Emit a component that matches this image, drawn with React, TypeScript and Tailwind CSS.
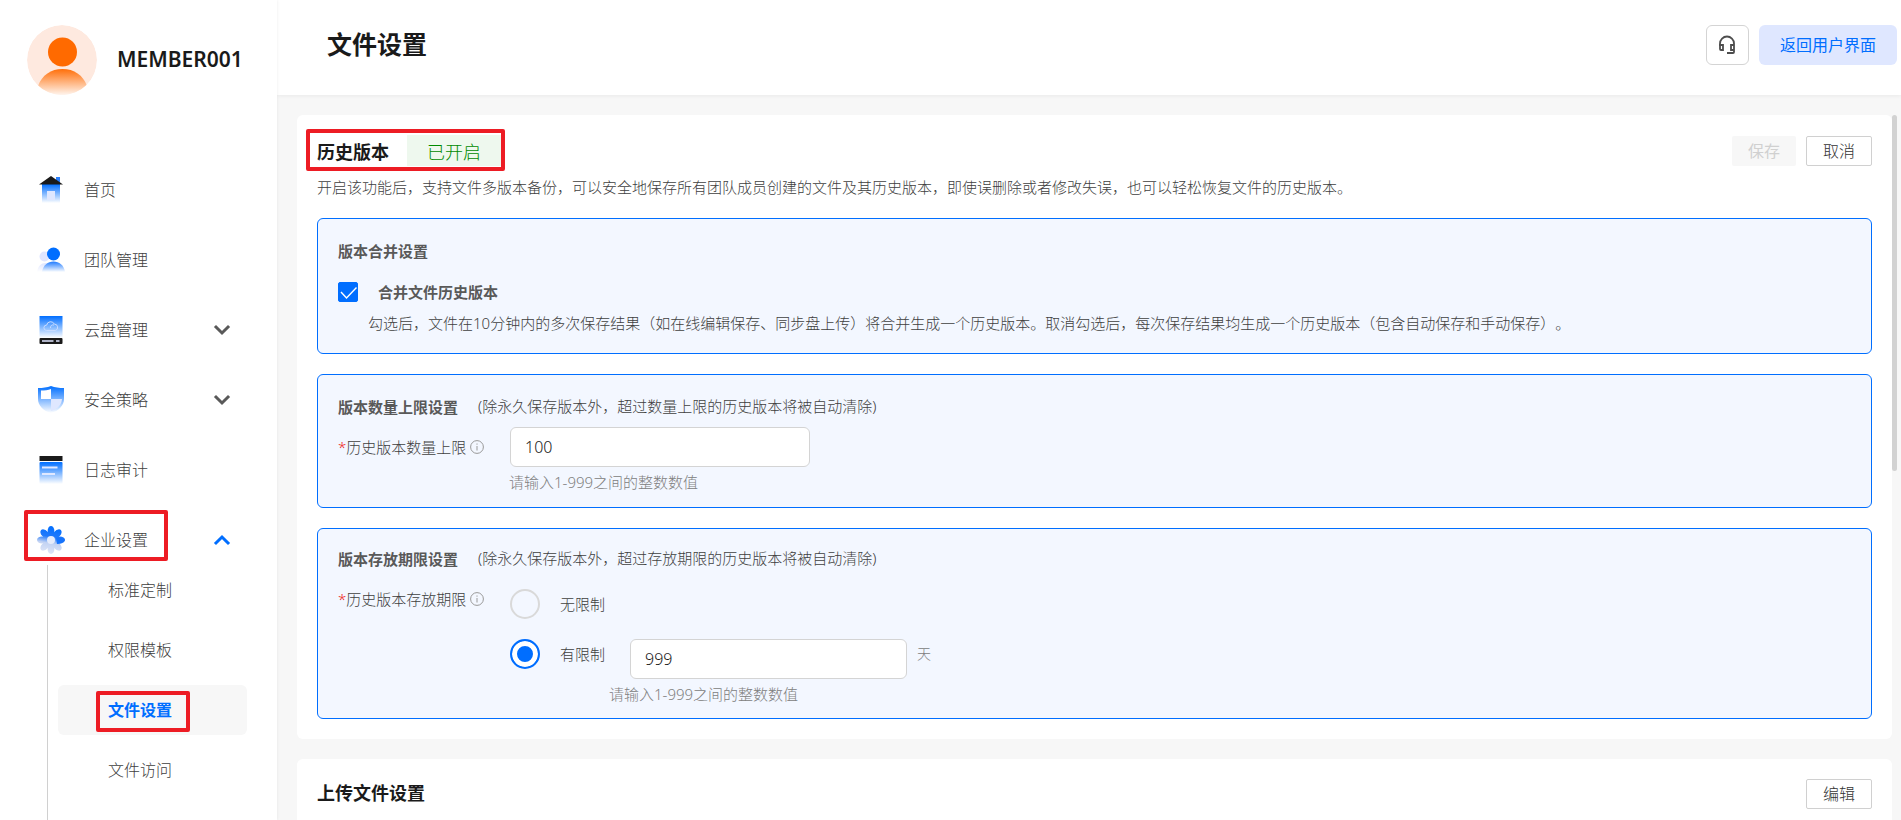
import { useState } from "react";
import type { ReactNode } from "react";
import { ChevronDown, ChevronUp } from "lucide-react";

function HomeIcon() {
  return (
    <svg width="28" height="28" viewBox="0 0 28 28">
      <defs>
        <linearGradient id="home" x1="0" y1="0" x2="0" y2="1">
          <stop offset="0" stopColor="#006eff" />
          <stop offset="1" stopColor="#fff" />
        </linearGradient>
      </defs>
      <path d="M19 1h4v6h-4z" fill="#2a7ffb" />
      <path d="M5 8h18v19H5z" fill="url(#home)" />
      <path d="M14 0l12 8.500H2z" fill="#1a1a1a" />
      <path d="M10 15h8v9h-8z" fill="#dfe7ff" />
    </svg>
  );
}

function TeamIcon() {
  return (
    <svg width="28" height="28" viewBox="0 0 28 28">
      <defs>
        <linearGradient id="team" x1="0" y1="0" x2="0" y2="1">
          <stop offset="0" stopColor="#1f7bff" />
          <stop offset="1" stopColor="#fff" />
        </linearGradient>
        <linearGradient id="teamBack" x1="0" y1="0" x2="0" y2="1">
          <stop offset="0" stopColor="#dfe5ff" />
          <stop offset="1" stopColor="#fff" />
        </linearGradient>
      </defs>
      <circle cx="7.500" cy="10.500" r="5" fill="#dfe5ff" />
      <path d="M0 26c1-6 4-9 9-9h3v9z" fill="url(#teamBack)" />
      <circle cx="16.500" cy="8" r="6.500" fill="#006eff" />
      <path d="M5 26c1-7 6-10.500 11.500-10.500S27 19 28 26z" fill="url(#team)" />
    </svg>
  );
}

function DriveIcon() {
  return (
    <svg width="28" height="28" viewBox="0 0 28 28">
      <defs>
        <linearGradient id="drive" x1="0" y1="0" x2="0" y2="1">
          <stop offset="0" stopColor="#006eff" />
          <stop offset="1" stopColor="#fff" />
        </linearGradient>
      </defs>
      <path d="M2.500 0h23v22h-23z" fill="url(#drive)" />
      <path
        d="M9.500 14.500a2.700 2.700 0 0 1 .2-5.400 4 4 0 0 1 7.600-1 3.300 3.300 0 0 1 1.200 6.400zM13.500 12c-.2-2 1.300-3.600 3.500-3"
        fill="none"
        stroke="#c9dcff"
        strokeWidth="1"
      />
      <rect x="2.500" y="22" width="23" height="6" rx="1" fill="#1a1a1a" />
      <path d="M5 25h11.500M19 25h3.500" stroke="#dfe5ff" strokeWidth="1.500" />
    </svg>
  );
}

function ShieldIcon() {
  return (
    <svg width="28" height="28" viewBox="0 0 28 28">
      <defs>
        <linearGradient id="shield" x1="0" y1="0" x2="0" y2="1">
          <stop offset="0" stopColor="#006eff" />
          <stop offset="1" stopColor="#fff" />
        </linearGradient>
      </defs>
      <path d="M14 0c4 1.500 8 2 13 2v11c0 6.500-5.500 12-13 14C6.500 25 1 19.500 1 13V2c5 0 9-.5 13-2z" fill="url(#shield)" />
      <path d="M14 3v10H4V4.500C8 4.500 11 4 14 3z" fill="#fff" />
      <path d="M14 13h11c-.5 5.500-4 10-11 12z" fill="#dfe7ff" />
    </svg>
  );
}

function LogIcon() {
  return (
    <svg width="28" height="28" viewBox="0 0 28 28">
      <defs>
        <linearGradient id="log" x1="0" y1="0" x2="0" y2="1">
          <stop offset="0" stopColor="#006eff" />
          <stop offset="1" stopColor="#fff" />
        </linearGradient>
      </defs>
      <path d="M2.500 0h23v5h-23z" fill="#1a1a1a" />
      <rect x="2.500" y="6" width="23" height="22" rx="1" fill="url(#log)" />
      <path d="M5 11.500h15.500M5 18h13" stroke="#e0e8ff" strokeWidth="2.200" />
    </svg>
  );
}

function GearIcon() {
  const petals = [0, 45, 90, 135, 180, 225, 270, 315];
  return (
    <svg width="28" height="28" viewBox="0 0 28 28">
      <defs>
        <linearGradient id="gear" gradientUnits="userSpaceOnUse" x1="16" y1="0" x2="11" y2="28">
          <stop offset="0" stopColor="#006eff" />
          <stop offset=".38" stopColor="#2079fb" />
          <stop offset=".62" stopColor="#c3d3f3" />
          <stop offset="1" stopColor="#dfe6f7" />
        </linearGradient>
        <mask id="gearShape">
          {petals.map((a) => (
            <ellipse key={a} cx="14" cy="5" rx="3.400" ry="5" fill="#fff" transform={`rotate(${a} 14 14)`} />
          ))}
          <circle cx="14" cy="14" r="8.500" fill="#fff" />
        </mask>
      </defs>
      <rect width="28" height="28" fill="url(#gear)" mask="url(#gearShape)" />
      <path d="M19 12c4-1 8 0 9 2-1 2.500-4 4-8 4z" fill="#1673fb" />
      <circle cx="14" cy="14" r="4" fill="#e6ecfb" />
    </svg>
  );
}

function Avatar() {
  return (
    <svg width="70" height="70" viewBox="0 0 70 70" className="shrink-0">
      <defs>
        <linearGradient id="body" x1="0" y1="0" x2="0" y2="1">
          <stop offset="0" stopColor="#ff6f0a" />
          <stop offset="1" stopColor="#fff5ee" />
        </linearGradient>
        <clipPath id="round">
          <circle cx="35" cy="35" r="35" />
        </clipPath>
      </defs>
      <g clipPath="url(#round)">
        <circle cx="35" cy="35" r="35" fill="#fee9df" />
        <circle cx="35.500" cy="27" r="14.500" fill="#ff6a00" />
        <path d="M11 61c4-11 13-17 24.500-17S56 50 60 61l-8 9H19z" fill="url(#body)" />
      </g>
    </svg>
  );
}

function InfoIcon() {
  return (
    <svg width="14" height="14" viewBox="0 0 14 14" className="shrink-0" fill="none" stroke="#999">
      <circle cx="7" cy="7" r="6.400" />
      <path d="M7 6v4.500M7 3.500v1.200" />
    </svg>
  );
}

function HeadsetIcon() {
  return (
    <svg width="18" height="20" viewBox="0 0 18 20" fill="none" stroke="#4d4d4d" strokeWidth="1.800">
      <path d="M2 11V8.500a7 7 0 0 1 14 0V17a1 1 0 0 1-1 1H9" />
      <path d="M2 10h3v5H3a1 1 0 0 1-1-1zM16 10h-3v5h3" />
    </svg>
  );
}

// red callout frame drawn over its relative parent
function Callout({ className }: { className: string }) {
  return <span className={`pointer-events-none absolute rounded-xs border-4 border-[#ed1c24] ${className}`} />;
}

type NavItem = { label: string; icon: ReactNode; expandable?: boolean; open?: boolean };

const navItems: NavItem[] = [
  { label: "首页", icon: <HomeIcon /> },
  { label: "团队管理", icon: <TeamIcon /> },
  { label: "云盘管理", icon: <DriveIcon />, expandable: true },
  { label: "安全策略", icon: <ShieldIcon />, expandable: true },
  { label: "日志审计", icon: <LogIcon /> },
  { label: "企业设置", icon: <GearIcon />, expandable: true, open: true },
];

const subItems = ["标准定制", "权限模板", "文件设置", "文件访问"];

function Sidebar() {
  return (
    <aside className="z-10 w-[277px] shrink-0 overflow-hidden bg-white shadow-[0_0_3px_rgba(0,0,0,0.08)]">
      <div className="flex items-center gap-5 pt-[25px] pl-[27px]">
        <Avatar />
        <span className="text-[21px] font-semibold text-[#1a1a1a]">MEMBER001</span>
      </div>
      <nav className="mt-[70px]">
        <ul className="flex flex-col gap-5">
          {navItems.map((item) => (
            <li key={item.label}>
              <a href="#" className="relative flex h-[50px] items-center pr-[43px] pl-[37px] text-base">
                {item.icon}
                <span className="ml-[19px] flex-1">{item.label}</span>
                {item.expandable &&
                  (item.open ? (
                    <ChevronUp size={24} strokeWidth={3} strokeLinecap="square" strokeLinejoin="miter" className="text-[#006eff]" />
                  ) : (
                    <ChevronDown size={24} strokeWidth={3} strokeLinecap="square" strokeLinejoin="miter" className="text-[#595959]" />
                  ))}
                {item.open && <Callout className="-top-[5px] left-6 h-[51px] w-36" />}
              </a>
            </li>
          ))}
        </ul>
        <ul className="ml-[47px] flex flex-col gap-2.5 border-l border-[#d0d0d0] pr-[30px] pb-10 pl-2.5">
          {subItems.map((label) => {
            const active = label === "文件设置";
            return (
              <li key={label}>
                <a
                  href="#"
                  className={`relative flex h-[50px] items-center rounded-md pl-[50px] text-base ${
                    active ? "bg-[#f7f7f7] font-semibold text-[#006eff]" : ""
                  }`}
                >
                  {label}
                  {active && <Callout className="top-1.5 left-[38px] h-[41px] w-[94px]" />}
                </a>
              </li>
            );
          })}
        </ul>
      </nav>
    </aside>
  );
}

function Panel({ className, children }: { className?: string; children: ReactNode }) {
  return (
    <section className={`rounded-md border border-[#006eff] bg-[#f3f7ff] px-5 ${className ?? ""}`}>{children}</section>
  );
}

function PanelTitle({ title, note }: { title: string; note?: string }) {
  return (
    <div className="flex items-start gap-5 text-[15px] leading-5">
      <h3 className="font-semibold text-[#595959]">{title}</h3>
      {note && <span className="leading-[18px]">{note}</span>}
    </div>
  );
}

function FieldLabel({ children, htmlFor }: { children: ReactNode; htmlFor?: string }) {
  return (
    <div className="flex w-[172px] shrink-0 items-center gap-1 text-[15px] leading-5">
      <label htmlFor={htmlFor}>
        <span className="text-[#f02020]">*</span>
        {children}
      </label>
      <InfoIcon />
    </div>
  );
}

const inputClass = "h-10 rounded-md border border-[#d4d4d4] bg-white px-3.5 text-base text-[#1a1a1a] outline-none";
const smallButton = "h-[30px] rounded-xs border border-[#d0d0d0] bg-white px-4 text-base leading-none text-[#333]";
const radioClass =
  "size-[30px] shrink-0 appearance-none rounded-full border-2 border-[#d9d9d9] checked:border-[#006eff] checked:bg-[#006eff] checked:shadow-[inset_0_0_0_5px_#fff]";

export default function App() {
  const [merge, setMerge] = useState(true);
  const [limited, setLimited] = useState(true);
  const [count, setCount] = useState("100");
  const [days, setDays] = useState("999");

  return (
    <div className="flex h-screen overflow-hidden bg-[#f7f7f7] font-['Noto_Sans','Noto_Sans_CJK_SC',sans-serif] font-light text-[#404040] [text-spacing-trim:space-all]">
      <Sidebar />
      <div className="flex min-w-0 flex-1 flex-col">
        <header className="flex h-[95px] shrink-0 items-start justify-between bg-white pt-[25px] pr-1 pl-[50px] shadow-[0_1px_4px_rgba(0,0,0,0.06)]">
          <h1 className="text-[25px] leading-[38px] font-semibold text-[#1a1a1a]">文件设置</h1>
          <div className="flex gap-2.5">
            <button aria-label="客服" className="flex h-10 w-[43px] items-center justify-center rounded-md border border-[#d4d4d4]">
              <HeadsetIcon />
            </button>
            <button className="h-10 rounded-md bg-[#dfe7ff] px-[21px] text-base font-normal text-[#006eff]">返回用户界面</button>
          </div>
        </header>

        <main className="relative min-h-0 flex-1 overflow-hidden pt-5 pr-[9px] pl-5">
          <section className="rounded-md bg-white p-5">
            <div className="flex items-start justify-between">
              <div className="relative flex items-end gap-[18px]">
                <h2 className="text-lg leading-7 font-semibold text-[#1a1a1a]">历史版本</h2>
                <span className="bg-[#eef8ee] px-5 pt-[3px] text-lg leading-7 text-[#008a00]">已开启</span>
                <Callout className="-top-1.5 -right-1 -bottom-[5px] -left-[11px]" />
              </div>
              <div className="flex gap-2.5 pt-px">
                <button disabled className="h-[30px] rounded-xs bg-[#f7f7f7] px-4 text-base leading-none font-normal text-[#d0d0d0]">
                  保存
                </button>
                <button className={smallButton}>取消</button>
              </div>
            </div>
            <p className="mt-[11px] text-[15px] leading-5">
              开启该功能后，支持文件多版本备份，可以安全地保存所有团队成员创建的文件及其历史版本，即使误删除或者修改失误，也可以轻松恢复文件的历史版本。
            </p>

            <div className="mt-[21px] flex flex-col gap-5">
              <Panel className="pt-[22px] pb-5">
                <PanelTitle title="版本合并设置" />
                <div className="mt-[21px] flex items-center gap-5">
                  <span className="grid">
                    <input
                      id="merge"
                      type="checkbox"
                      checked={merge}
                      onChange={(e) => setMerge(e.target.checked)}
                      className="peer col-start-1 row-start-1 size-5 appearance-none rounded-xs border border-[#d0d0d0] bg-white checked:border-[#006eff] checked:bg-[#006eff]"
                    />
                    <svg
                      width="20"
                      height="20"
                      viewBox="0 0 20 20"
                      fill="none"
                      stroke="#fff"
                      strokeWidth="1.400"
                      className="pointer-events-none invisible col-start-1 row-start-1 peer-checked:visible"
                    >
                      <path d="M3 10l5.500 6L18.500 5.500" />
                    </svg>
                  </span>
                  <label htmlFor="merge" className="text-[15px] leading-5 font-semibold text-[#595959]">
                    合并文件历史版本
                  </label>
                </div>
                <p className="mt-[11px] pl-[30px] text-[15px] leading-5">
                  勾选后，文件在10分钟内的多次保存结果（如在线编辑保存、同步盘上传）将合并生成一个历史版本。取消勾选后，每次保存结果均生成一个历史版本（包含自动保存和手动保存）。
                </p>
              </Panel>

              <Panel className="pt-[22px] pb-[15px]">
                <PanelTitle title="版本数量上限设置" note="(除永久保存版本外，超过数量上限的历史版本将被自动清除)" />
                <div className="mt-2.5 flex items-center">
                  <FieldLabel htmlFor="count">历史版本数量上限</FieldLabel>
                  <input id="count" type="text" value={count} onChange={(e) => setCount(e.target.value)} className={`${inputClass} w-[300px]`} />
                </div>
                <p className="mt-[5px] pl-[171px] text-[15px] leading-5 text-[#808080]">请输入1-999之间的整数数值</p>
              </Panel>

              <Panel className="pt-5 pb-3.5">
                <PanelTitle title="版本存放期限设置" note="(除永久保存版本外，超过存放期限的历史版本将被自动清除)" />
                <div className="mt-5 flex items-start">
                  <FieldLabel>历史版本存放期限</FieldLabel>
                  <div className="flex flex-col gap-5">
                    <label className="flex items-center gap-5 text-[15px] leading-5">
                      <input type="radio" name="limit" checked={!limited} onChange={() => setLimited(false)} className={radioClass} />
                      无限制
                    </label>
                    <div className="flex items-start">
                      <label className="flex items-center gap-5 text-[15px] leading-5">
                        <input type="radio" name="limit" checked={limited} onChange={() => setLimited(true)} className={radioClass} />
                        有限制
                      </label>
                      <div className="ml-[25px] flex items-start gap-2.5">
                        <input
                          type="text"
                          aria-label="存放天数"
                          value={days}
                          onChange={(e) => setDays(e.target.value)}
                          className={`${inputClass} w-[277px]`}
                        />
                        <span className="text-sm leading-[30px] text-[#808080]">天</span>
                      </div>
                    </div>
                  </div>
                </div>
                <p className="mt-[5px] pl-[271px] text-[15px] leading-5 text-[#808080]">请输入1-999之间的整数数值</p>
              </Panel>
            </div>
          </section>

          <section className="mt-5 rounded-md bg-white p-5 pb-24">
            <div className="flex items-start justify-between">
              <h2 className="text-lg leading-7 font-semibold text-[#1a1a1a]">上传文件设置</h2>
              <button className={smallButton}>编辑</button>
            </div>
          </section>

          <div className="absolute top-5 right-1 h-[356px] w-[5px] rounded-full bg-[#d2d2d2]" />
        </main>
      </div>
    </div>
  );
}
